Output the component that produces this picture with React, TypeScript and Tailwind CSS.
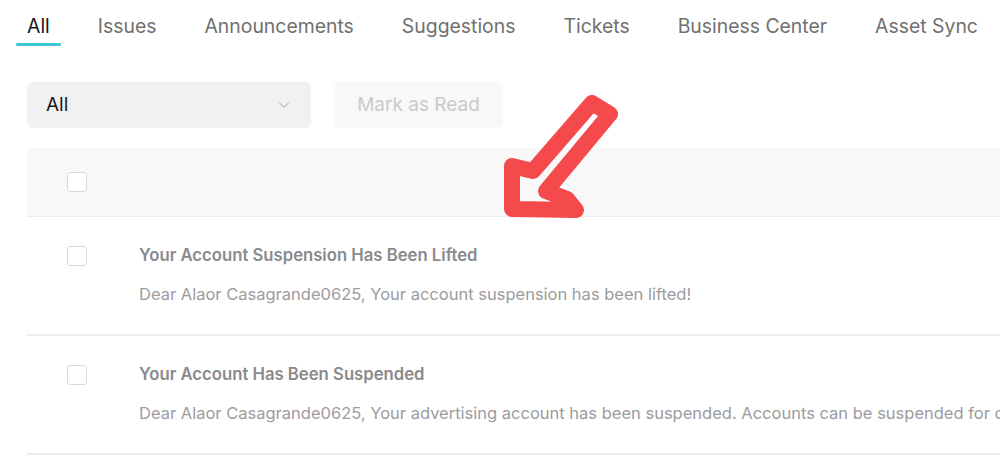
import { ChevronDown } from "lucide-react";

const tabs = [
  "All",
  "Issues",
  "Announcements",
  "Suggestions",
  "Tickets",
  "Business Center",
  "Asset Sync",
];

const notices = [
  {
    title: "Your Account Suspension Has Been Lifted",
    body: "Dear Alaor Casagrande0625, Your account suspension has been lifted!",
  },
  {
    title: "Your Account Has Been Suspended",
    body: "Dear Alaor Casagrande0625, Your advertising account has been suspended. Accounts can be suspended for one or more reasons.",
  },
];

function Box() {
  return (
    <span className="block w-5 h-5 shrink-0 rounded-[3px] border-[1.5px] border-[#d9d9dc] bg-white" />
  );
}

function Arrow() {
  return (
    <svg
      className="absolute left-0 top-0 pointer-events-none"
      width="1000"
      height="465"
      viewBox="0 0 1000 465"
    >
      <path
        d="M512 209 L512 166 L533 171 L592 103 L610 114 L546 191 L567 199 L576 210 Z"
        fill="none"
        stroke="#f44a4c"
        strokeWidth="16"
        strokeLinejoin="round"
        strokeLinecap="round"
      />
    </svg>
  );
}

export default function App() {
  return (
    <div
      className="relative w-[1000px] h-[465px] overflow-hidden bg-white"
      style={{ fontFamily: "Inter, 'Noto Sans', sans-serif" }}
    >
      <div className="flex gap-[26px] pl-4 h-12 items-stretch">
        {tabs.map((t, i) => (
          <div
            key={t}
            className={
              "relative flex items-center pt-[5px] px-[11px] whitespace-nowrap text-[19.4px] " +
              (i === 0 ? "text-[#161823]" : "text-[#707070]")
            }
          >
            {t}
            {i === 0 && (
              <span className="absolute left-0 right-0 bottom-[2px] h-[3px] rounded-full bg-[#3cc8d3]" />
            )}
          </div>
        ))}
      </div>

      <div className="flex gap-[23px] pl-[27px] mt-[34px]">
        <div className="flex items-center justify-between w-[284px] h-[46px] rounded-md bg-[#f1f1f2] pl-[19px] pr-[18px]">
          <span className="text-[19px] text-[#161823]">All</span>
          <ChevronDown className="w-[18px] h-[18px] text-[#c4c4c6]" strokeWidth={1.5} />
        </div>
        <div className="flex items-center justify-center w-[169px] h-[46px] rounded-md bg-[#f8f8f9] text-[19px] text-[#cacacc]">
          Mark as Read
        </div>
      </div>

      <div className="ml-[27px] mt-5 w-[1100px]">
        <div className="flex items-center h-[69px] pl-10 bg-[#f8f8f9] border-b border-[#ececee]">
          <Box />
        </div>
        {notices.map((n) => (
          <div
            key={n.title}
            className="flex items-start pl-10 pt-[26px] pb-[28px] border-b-2 border-[#ececee]"
          >
            <div className="mt-[3px]">
              <Box />
            </div>
            <div className="ml-[52px] flex flex-col gap-[15px] whitespace-nowrap">
              <div className="text-[16.7px] leading-6 font-semibold text-[#8a8a8c]">
                {n.title}
              </div>
              <div className="text-[16.5px] leading-6 text-[#9c9c9e]">{n.body}</div>
            </div>
          </div>
        ))}
      </div>

      <Arrow />
    </div>
  );
}
